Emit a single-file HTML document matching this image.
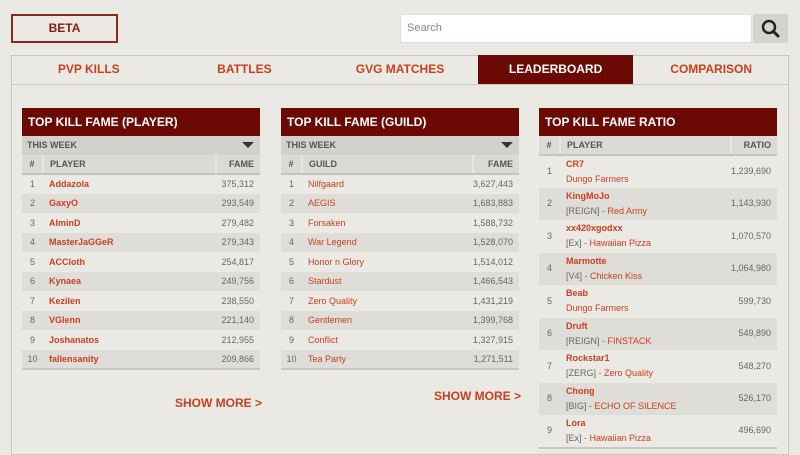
<!DOCTYPE html>
<html><head><style>
*{margin:0;padding:0;box-sizing:border-box}
body{width:800px;height:446px;overflow:hidden;background:#ebe9e4;font-family:"Liberation Sans",sans-serif;position:relative;color:#666}
.abs{position:absolute}
.beta{left:11px;top:14px;width:107px;height:29px;border:2px solid #8a2a1e;color:#8a1a10;font-weight:bold;font-size:12px;text-align:center;line-height:25px}
.search{left:400px;top:14px;width:352px;height:29px;background:#fff;border:1px solid #ddd;font-size:11px;color:#888;padding-left:6px;line-height:27px}
.sbtn{left:753px;top:14px;width:35px;height:29px;background:#d5d3ce}
.frame{left:11px;top:55px;width:778px;height:400px;border:1px solid #c9c7c2}
.tabs{left:11px;top:55px;width:778px;height:30px;border-bottom:1px solid #c9c7c2;display:flex}
.tab{flex:1;text-align:center;font-weight:bold;font-size:12px;color:#c8401e;line-height:29px}
.tab.on{background:#6b0a04;color:#fff}
.panel{width:238px}
.hd{height:28px;background:#6b0a04;color:#fff;font-weight:bold;font-size:12px;line-height:28px;padding-left:6px}
.wk{height:19px;background:#d3d1cc;font-size:9px;font-weight:bold;color:#555;line-height:19px;padding-left:5px;position:relative}
.wk:after{content:"";position:absolute;right:6px;top:6px;border-left:6px solid transparent;border-right:6px solid transparent;border-top:6px solid #333}
table{width:100%;border-collapse:collapse;font-size:9px}
th{background:#dcdad5;height:19px;text-align:left;color:#555;font-weight:bold;border-bottom:2px solid #c5c3be}
th.n{width:21px;text-align:center;border-right:2px solid #e8e6e1}
th.f{text-align:right;padding-right:6px;border-left:2px solid #e8e6e1;width:44px}
td{height:19.5px;color:#666}
td.n{text-align:center}
td.p{padding-left:6px;color:#c8401e;font-weight:bold}
td.g{padding-left:6px;color:#c8401e}
td.f{text-align:right;padding-right:6px}
tr:nth-child(even) td{background:#dfddd8}
tbody tr:last-child td{border-bottom:2px solid #c9c7c2}
.r3 td{height:32.5px;line-height:15px}
.r3 span{color:#666;font-weight:normal}
.r3 em{font-style:normal;color:#c8401e;font-weight:normal}
.sm{font-weight:bold;font-size:12px;color:#c8401e}
</style></head><body>
<div class="abs beta">BETA</div>
<div class="abs search">Search</div>
<div class="abs sbtn"><svg width="35" height="29" viewBox="0 0 35 29"><circle cx="16" cy="13" r="6" fill="none" stroke="#222" stroke-width="2.5"/><line x1="20.5" y1="17.5" x2="25" y2="22" stroke="#222" stroke-width="3" stroke-linecap="round"/></svg></div>
<div class="abs frame"></div>
<div class="abs tabs"><div class="tab">PVP KILLS</div><div class="tab">BATTLES</div><div class="tab">GVG MATCHES</div><div class="tab on">LEADERBOARD</div><div class="tab">COMPARISON</div></div>

<div class="abs panel" style="left:22px;top:108px">
<div class="hd">TOP KILL FAME (PLAYER)</div><div class="wk">THIS WEEK</div>
<table><thead><tr><th class="n">#</th><th style="padding-left:6px">PLAYER</th><th class="f">FAME</th></tr></thead><tbody>
<tr><td class="n">1</td><td class="p">Addazola</td><td class="f">375,312</td></tr>
<tr><td class="n">2</td><td class="p">GaxyO</td><td class="f">293,549</td></tr>
<tr><td class="n">3</td><td class="p">AlminD</td><td class="f">279,482</td></tr>
<tr><td class="n">4</td><td class="p">MasterJaGGeR</td><td class="f">279,343</td></tr>
<tr><td class="n">5</td><td class="p">ACCloth</td><td class="f">254,817</td></tr>
<tr><td class="n">6</td><td class="p">Kynaea</td><td class="f">249,756</td></tr>
<tr><td class="n">7</td><td class="p">Kezilen</td><td class="f">238,550</td></tr>
<tr><td class="n">8</td><td class="p">VGlenn</td><td class="f">221,140</td></tr>
<tr><td class="n">9</td><td class="p">Joshanatos</td><td class="f">212,955</td></tr>
<tr><td class="n">10</td><td class="p">fallensanity</td><td class="f">209,866</td></tr>
</tbody></table></div>
<div class="abs sm" style="left:175px;top:396px">SHOW MORE &gt;</div>

<div class="abs panel" style="left:281px;top:108px">
<div class="hd">TOP KILL FAME (GUILD)</div><div class="wk">THIS WEEK</div>
<table><thead><tr><th class="n">#</th><th style="padding-left:6px">GUILD</th><th class="f">FAME</th></tr></thead><tbody>
<tr><td class="n">1</td><td class="g">Nilfgaard</td><td class="f">3,627,443</td></tr>
<tr><td class="n">2</td><td class="g">AEGIS</td><td class="f">1,683,883</td></tr>
<tr><td class="n">3</td><td class="g">Forsaken</td><td class="f">1,588,732</td></tr>
<tr><td class="n">4</td><td class="g">War Legend</td><td class="f">1,528,070</td></tr>
<tr><td class="n">5</td><td class="g">Honor n Glory</td><td class="f">1,514,012</td></tr>
<tr><td class="n">6</td><td class="g">Stardust</td><td class="f">1,466,543</td></tr>
<tr><td class="n">7</td><td class="g">Zero Quality</td><td class="f">1,431,219</td></tr>
<tr><td class="n">8</td><td class="g">Gentlemen</td><td class="f">1,399,768</td></tr>
<tr><td class="n">9</td><td class="g">Conflict</td><td class="f">1,327,915</td></tr>
<tr><td class="n">10</td><td class="g">Tea Party</td><td class="f">1,271,511</td></tr>
</tbody></table></div>
<div class="abs sm" style="left:434px;top:389px">SHOW MORE &gt;</div>

<div class="abs panel" style="left:539px;top:108px">
<div class="hd">TOP KILL FAME RATIO</div>
<table class="r3"><thead><tr><th class="n">#</th><th style="padding-left:6px">PLAYER</th><th class="f">RATIO</th></tr></thead><tbody>
<tr><td class="n">1</td><td class="p">CR7<br><em>Dungo Farmers</em></td><td class="f">1,239,690</td></tr>
<tr><td class="n">2</td><td class="p">KingMoJo<br><span>[REIGN] - </span><em>Red Army</em></td><td class="f">1,143,930</td></tr>
<tr><td class="n">3</td><td class="p">xx420xgodxx<br><span>[Ex] - </span><em>Hawaiian Pizza</em></td><td class="f">1,070,570</td></tr>
<tr><td class="n">4</td><td class="p">Marmotte<br><span>[V4] - </span><em>Chicken Kiss</em></td><td class="f">1,064,980</td></tr>
<tr><td class="n">5</td><td class="p">Beab<br><em>Dungo Farmers</em></td><td class="f">599,730</td></tr>
<tr><td class="n">6</td><td class="p">Druft<br><span>[REIGN] - </span><em>FINSTACK</em></td><td class="f">549,890</td></tr>
<tr><td class="n">7</td><td class="p">Rockstar1<br><span>[ZERG] - </span><em>Zero Quality</em></td><td class="f">548,270</td></tr>
<tr><td class="n">8</td><td class="p">Chong<br><span>[BIG] - </span><em>ECHO OF SILENCE</em></td><td class="f">526,170</td></tr>
<tr><td class="n">9</td><td class="p">Lora<br><span>[Ex] - </span><em>Hawaiian Pizza</em></td><td class="f">496,690</td></tr>
</tbody></table></div>
</body></html>
